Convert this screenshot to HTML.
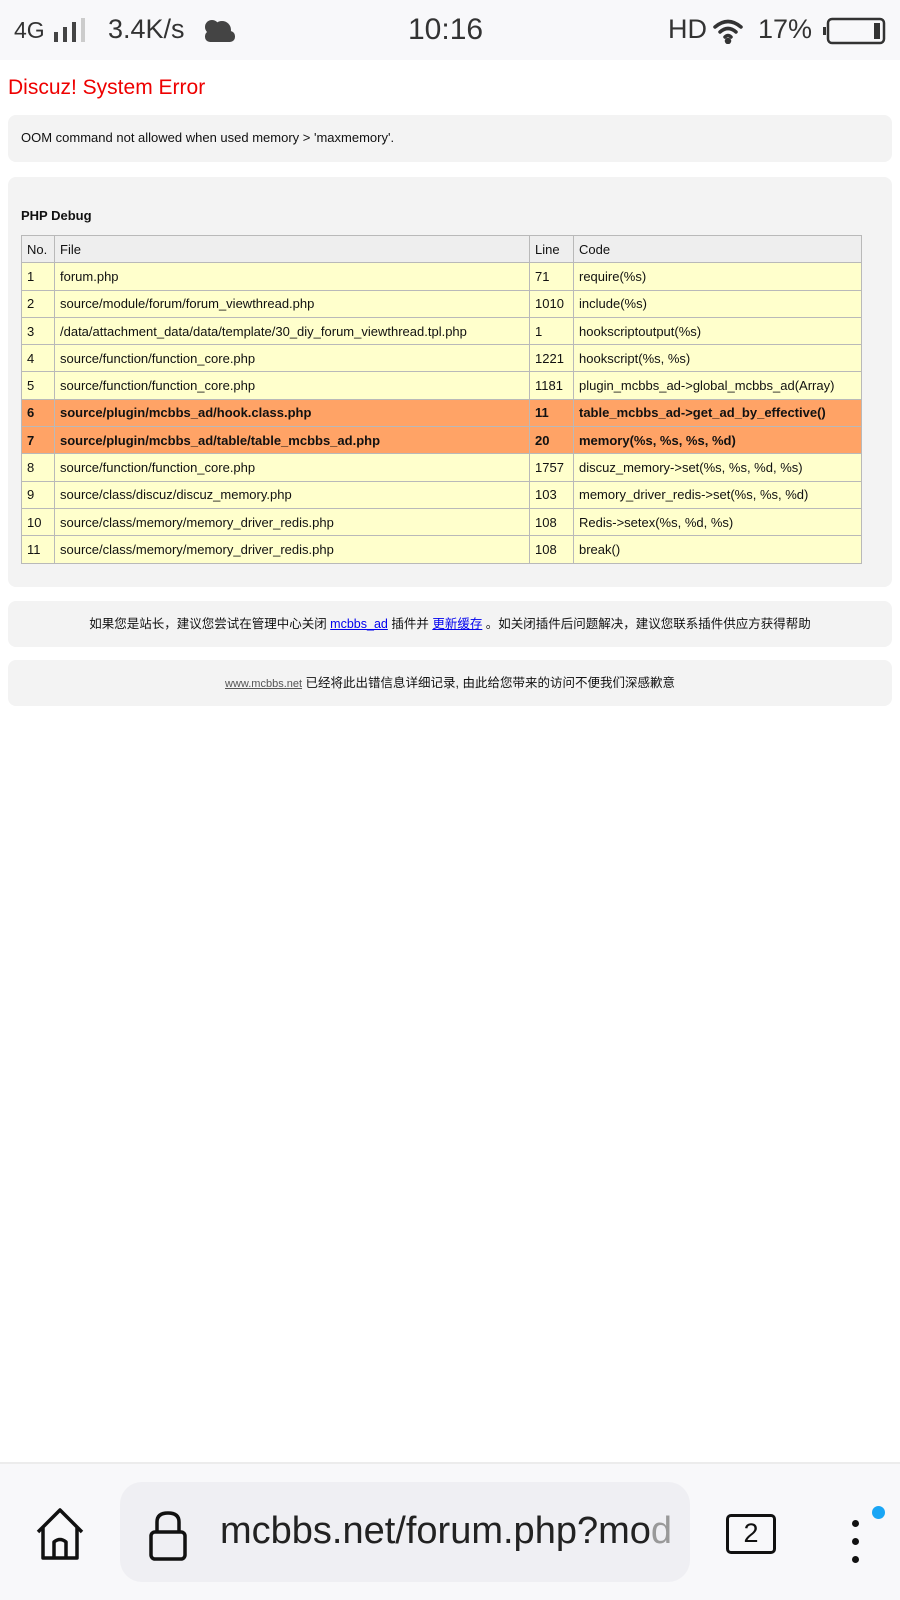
<!DOCTYPE html>
<html><head><meta charset="utf-8">
<style>
*{margin:0;padding:0;box-sizing:border-box}
body{width:900px;height:1600px;background:#fff;font-family:"Liberation Sans","Noto Sans CJK SC",sans-serif;position:relative;overflow:hidden;color:#111}
.sb{position:absolute;left:0;top:0;width:900px;height:60px;background:#f8f8fa;color:#333}
.sb span{position:absolute;top:14px;font-size:27px}
h1{position:absolute;left:8px;top:76px;font-size:21px;font-weight:normal;color:#e00}
.box{position:absolute;left:8px;width:884px;background:#f3f3f3;border-radius:8px}
.tbl{position:absolute;left:21px;top:235px;width:841px;border-collapse:collapse;font-size:13px}
.tbl td{border:1px solid #b9b9b9;height:27.3px;padding:0 5px;background:#ffffcc;white-space:nowrap}
.tbl tr.h td{background:#eeeeee}
.tbl tr.o td{background:#ffa366;font-weight:bold}
.bb{position:absolute;left:0;top:1462px;width:900px;height:138px;background:#f8f8fa;border-top:2px solid #ececec}
a{color:#00e;text-decoration:underline}
</style></head><body>
<div class="sb">
<span style="left:14px;font-size:23px;top:17px">4G</span>
<svg style="position:absolute;left:53px;top:18px" width="36" height="26"><rect x="1" y="14" width="4" height="10" fill="#444"/><rect x="10" y="9" width="4" height="15" fill="#444"/><rect x="19" y="4" width="4" height="20" fill="#444"/><rect x="28" y="0" width="4" height="24" fill="#ccc"/></svg>
<span style="left:108px">3.4K/s</span>
<svg style="position:absolute;left:203px;top:18px" width="34" height="26"><circle cx="9" cy="9" r="7" fill="#444"/><circle cx="19" cy="12" r="9" fill="#444"/><rect x="2" y="13" width="30" height="11" rx="5" fill="#444"/></svg>
<span style="left:408px;font-size:30px;top:13px">10:16</span>
<span style="left:668px">HD</span>
<svg style="position:absolute;left:712px;top:16px" width="34" height="28" fill="none" stroke="#333" stroke-width="3.5" stroke-linecap="round"><path d="M3 11 Q16 0 29 11"/><path d="M8 16 Q16 9 24 16"/><path d="M13 21 Q16 18 19 21"/><circle cx="16" cy="25" r="1.5" fill="#333"/></svg>
<span style="left:758px">17%</span>
<svg style="position:absolute;left:823px;top:17px" width="64" height="28"><rect x="5" y="2" width="56" height="24" rx="4" fill="none" stroke="#333" stroke-width="2.5"/><rect x="0" y="10" width="3" height="8" fill="#333"/><rect x="51" y="6" width="6" height="16" fill="#333"/></svg>
</div>
<h1>Discuz! System Error</h1>
<div class="box" style="top:115px;height:47px"><div style="position:absolute;left:13px;top:15px;font-size:13px">OOM command not allowed when used memory &gt; 'maxmemory'.</div></div>
<div class="box" style="top:177px;height:410px"><div style="position:absolute;left:13px;top:31px;font-size:13px;font-weight:bold">PHP Debug</div></div>
<table class="tbl">
<colgroup><col style="width:33px"><col style="width:475px"><col style="width:44px"><col></colgroup>
<tr class="h"><td>No.</td><td>File</td><td>Line</td><td>Code</td></tr>
<tr><td>1</td><td>forum.php</td><td>71</td><td>require(%s)</td></tr>
<tr><td>2</td><td>source/module/forum/forum_viewthread.php</td><td>1010</td><td>include(%s)</td></tr>
<tr><td>3</td><td>/data/attachment_data/data/template/30_diy_forum_viewthread.tpl.php</td><td>1</td><td>hookscriptoutput(%s)</td></tr>
<tr><td>4</td><td>source/function/function_core.php</td><td>1221</td><td>hookscript(%s, %s)</td></tr>
<tr><td>5</td><td>source/function/function_core.php</td><td>1181</td><td>plugin_mcbbs_ad-&gt;global_mcbbs_ad(Array)</td></tr>
<tr class="o"><td>6</td><td>source/plugin/mcbbs_ad/hook.class.php</td><td>11</td><td>table_mcbbs_ad-&gt;get_ad_by_effective()</td></tr>
<tr class="o"><td>7</td><td>source/plugin/mcbbs_ad/table/table_mcbbs_ad.php</td><td>20</td><td>memory(%s, %s, %s, %d)</td></tr>
<tr><td>8</td><td>source/function/function_core.php</td><td>1757</td><td>discuz_memory-&gt;set(%s, %s, %d, %s)</td></tr>
<tr><td>9</td><td>source/class/discuz/discuz_memory.php</td><td>103</td><td>memory_driver_redis-&gt;set(%s, %s, %d)</td></tr>
<tr><td>10</td><td>source/class/memory/memory_driver_redis.php</td><td>108</td><td>Redis-&gt;setex(%s, %d, %s)</td></tr>
<tr><td>11</td><td>source/class/memory/memory_driver_redis.php</td><td>108</td><td>break()</td></tr>
</table>
<div class="box" style="top:601px;height:46px;text-align:center;font-size:12.5px;line-height:46px">如果您是站长，建议您尝试在管理中心关闭 <a>mcbbs_ad</a> 插件并 <a>更新缓存</a> 。如关闭插件后问题解决，建议您联系插件供应方获得帮助</div>
<div class="box" style="top:660px;height:46px;text-align:center;font-size:12.5px;line-height:46px"><a style="color:#555;font-size:11px">www.mcbbs.net</a> 已经将此出错信息详细记录, 由此给您带来的访问不便我们深感歉意</div>
<div class="bb">
<svg style="position:absolute;left:34px;top:42px" width="52" height="56" fill="none" stroke="#111" stroke-width="3.5" stroke-linejoin="round"><path d="M4 26 L26 4 L48 26 M9 21 V52 H43 V21"/><path d="M20 52 V36 Q26 31 32 36 V52"/></svg>
<div style="position:absolute;left:120px;top:18px;width:570px;height:100px;background:#efeff3;border-radius:22px;overflow:hidden">
<svg style="position:absolute;left:28px;top:28px" width="40" height="52" fill="none" stroke="#111" stroke-width="3.5"><path d="M9 22 V12 Q9 3 20 3 Q31 3 31 12 V22"/><rect x="3" y="22" width="34" height="27" rx="4"/></svg>
<div style="position:absolute;left:100px;top:28px;font-size:38px;color:#222;white-space:nowrap">mcbbs.net/forum.php?mo<span style="color:#999">d</span></div>
</div>
<div style="position:absolute;left:726px;top:50px;width:50px;height:40px;border:3.5px solid #111;border-radius:5px;font-size:27px;text-align:center;line-height:33px">2</div>
<div style="position:absolute;left:852px;top:56px;width:7px;height:7px;border-radius:50%;background:#111"></div>
<div style="position:absolute;left:852px;top:74px;width:7px;height:7px;border-radius:50%;background:#111"></div>
<div style="position:absolute;left:852px;top:92px;width:7px;height:7px;border-radius:50%;background:#111"></div>
<div style="position:absolute;left:872px;top:42px;width:13px;height:13px;border-radius:50%;background:#1aa6f5"></div>
</div>
</body></html>
